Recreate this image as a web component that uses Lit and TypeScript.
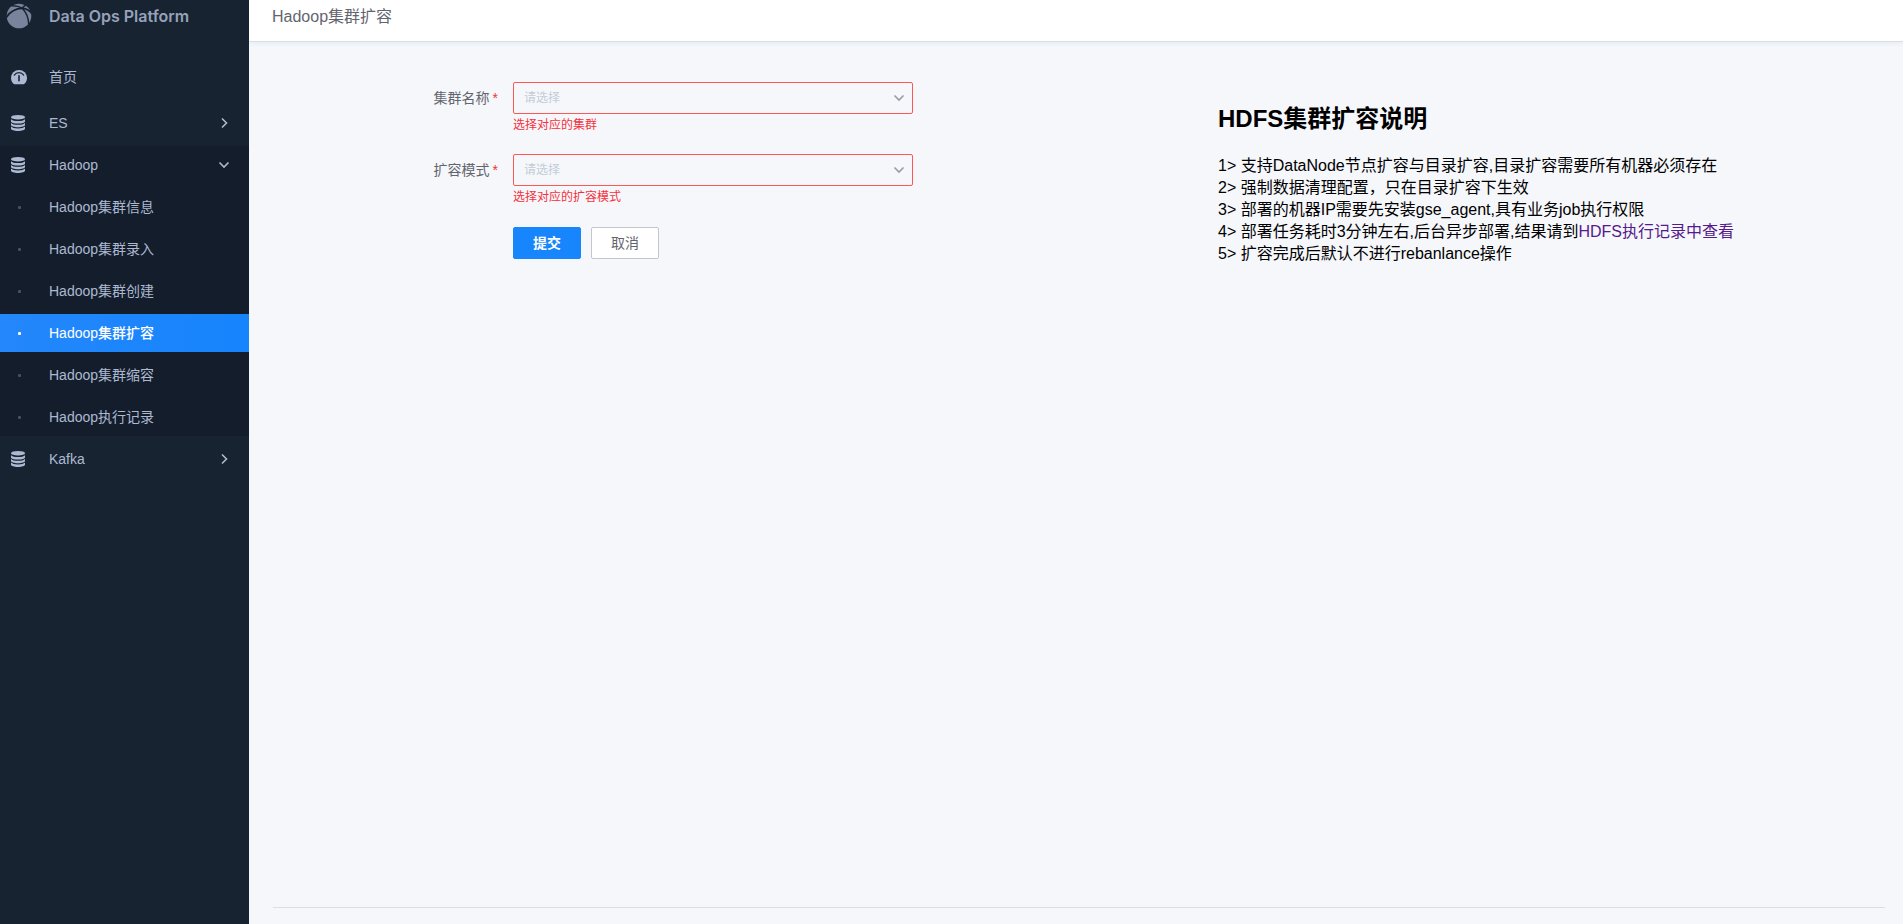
import { LitElement, html, css, svg } from "lit";
import { customElement, state } from "lit/decorators.js";
import { classMap } from "lit/directives/class-map.js";

const FONT = css`"Liberation Sans", "Noto Sans CJK SC", sans-serif`;

const dbIcon = svg`<svg class="icon" viewBox="0 0 16 18" width="16" height="18" fill="currentColor" aria-hidden="true">
  <ellipse cx="8" cy="3.2" rx="7" ry="2.3"/>
  <path d="M1 5.2c1.200 1.300 3.600 1.900 7 1.900s5.800-.6 7-1.900v2.200c0 1.200-3.100 2.200-7 2.200S1 8.600 1 7.400z"/>
  <path d="M1 8.900c1.200 1.300 3.600 1.900 7 1.900s5.800-.6 7-1.900v2.200c0 1.200-3.100 2.200-7 2.200s-7-1-7-2.200z"/>
  <path d="M1 12.600c1.200 1.300 3.600 1.900 7 1.900s5.800-.6 7-1.900v2.200c0 1.200-3.100 2.200-7 2.200s-7-1-7-2.200z"/>
</svg>`;

const gaugeIcon = svg`<svg class="icon gauge" viewBox="0 0 16 16" width="16" height="16" aria-hidden="true">
  <path fill="currentColor" d="M3.300 15.300C1.300 14 0 11.500 0 8.900a8 8 0 0 1 16 0c0 2.600-1.300 5.100-3.300 6.400z"/>
  <path fill="none" stroke="#182332" stroke-width="1.200" stroke-linecap="round" d="M3.300 6.200a5.600 5.600 0 0 1 9.400 0"/>
  <path fill="none" stroke="#182332" stroke-width="1.600" stroke-linecap="round" d="M8 6.800v5"/>
</svg>`;

const logo = svg`<svg class="logo" viewBox="0 0 26 26" width="26" height="26" aria-hidden="true">
  <circle cx="13" cy="13" r="12.300" fill="#78849c"/>
  <path fill="none" stroke="#182332" stroke-width="1.800" d="M.2 14.500C3.500 9 10 5 17 5.400c3.600.3 6.600 2 9 5.200"/>
  <path fill="none" stroke="#182332" stroke-width="1.500" d="M16.200 5.200c4.800 4.600 6.400 10 6.600 16.800M5.500 2.800c3.800-.2 7.700.6 10.700 2.400M16.200 5.200c1-1.300 2-2.200 3.600-3"/>
</svg>`;

const chevron = (cls: string, d: string) => html`<svg class=${cls} viewBox="0 0 12 12" width="12" height="12" aria-hidden="true">
  <path d=${d} fill="none" stroke="currentColor" stroke-width="1.600" />
</svg>`;
const DOWN = "M1.500 3.500 6 8l4.500-4.500";
const RIGHT = "M4 1.500 8.500 6 4 10.500";

@customElement("side-nav")
class SideNav extends LitElement {
  @state() private open = "Hadoop";
  @state() private current = "Hadoop集群扩容";

  private groups = [
    { name: "ES", items: [] as string[] },
    {
      name: "Hadoop",
      items: ["Hadoop集群信息", "Hadoop集群录入", "Hadoop集群创建", "Hadoop集群扩容", "Hadoop集群缩容", "Hadoop执行记录"],
    },
    { name: "Kafka", items: [] as string[] },
  ];

  static styles = css`
    :host { display: block; background: #182332; color: #acb9d1; font: 14px/20px ${FONT}; }
    .brand { display: flex; align-items: center; height: 32px; padding-left: 6px; color: #96a2b9; font-size: 16px; font-weight: 600; font-family: Inter, "Noto Sans CJK SC", sans-serif; }
    .logo { flex: none; width: 26px; margin-right: 17px; }
    .menu { display: flex; flex-direction: column; gap: 4px; padding-top: 26px; }
    .row { box-sizing: border-box; display: grid; grid-template-columns: 39px 1fr 12px; align-items: center; width: 100%; height: 38px; padding: 0 19px 0 10px; border: 0; background: none; color: inherit; font: inherit; text-align: left; text-decoration: none; cursor: pointer; }
    .home { margin-bottom: 4px; }
    .icon { display: block; }
    .gauge { margin-left: 1px; }
    .group { display: flex; flex-direction: column; gap: 4px; }
    .group.open { background: #141d2b; }
    .dot { width: 3px; height: 3px; margin-left: 8px; border-radius: 1px; background: #48505e; }
    .active { background: linear-gradient(90deg, #2487fb, #1684fd); color: #fff; font-weight: 500; }
    .active .dot { background: #fff; }
  `;

  render() {
    return html`
      <div class="brand">${logo}<span>Data Ops Platform</span></div>
      <nav class="menu">
        <a class="row home" href="#home">${gaugeIcon}<span>首页</span></a>
        ${this.groups.map((g) => {
          const open = g.name === this.open;
          return html`<div class=${classMap({ group: true, open })}>
            <button class="row" type="button" aria-expanded=${open ? "true" : "false"}
              @click=${() => (this.open = open ? "" : g.name)}>
              ${dbIcon}<span>${g.name}</span>${chevron("arrow", open ? DOWN : RIGHT)}
            </button>
            ${open ? g.items.map((t) => html`<a class=${classMap({ row: true, active: t === this.current })} href="#"
              @click=${() => (this.current = t)}><i class="dot"></i><span>${t}</span></a>`) : ""}
          </div>`;
        })}
      </nav>`;
  }
}

@customElement("scale-form")
class ScaleForm extends LitElement {
  private fields = [
    { id: "cluster", label: "集群名称", error: "选择对应的集群" },
    { id: "mode", label: "扩容模式", error: "选择对应的扩容模式" },
  ];

  static styles = css`
    :host { display: block; font: 14px/32px ${FONT}; color: #63656e; }
    form { display: grid; grid-template-columns: 150px minmax(0, 400px); }
    label { padding-right: 14px; text-align: right; }
    .star { padding: 0 1px 0 3px; color: #ea3636; font-size: 14px; }
    .field { min-height: 72px; }
    .box { display: grid; align-items: center; }
    select { grid-area: 1 / 1; appearance: none; box-sizing: border-box; width: 100%; height: 32px; padding: 0 36px 0 10px; border: 1px solid #ff5656; border-radius: 2px; background: transparent; color: #c3cdd7; font: 12px/30px ${FONT}; outline: none; }
    .arrow { grid-area: 1 / 1; justify-self: end; margin-right: 8px; color: #979ba5; pointer-events: none; }
    .error { margin: 0; padding-top: 2px; color: #f5313c; font-size: 12px; line-height: 18px; }
    .actions { grid-column: 2; display: flex; gap: 10px; padding-top: 1px; }
    button { box-sizing: border-box; width: 68px; height: 32px; padding: 0; border: 1px solid #c4c6cc; border-radius: 2px; background: #fff; color: #63656e; font: 14px/30px ${FONT}; cursor: pointer; }
    .primary { border-color: #1785fc; background: #1785fc; color: #fff; font-weight: 700; }
  `;

  render() {
    return html`<form @submit=${(e: Event) => e.preventDefault()}>
      ${this.fields.map((f) => html`
        <label for=${f.id}>${f.label}<span class="star">*</span></label>
        <div class="field">
          <div class="box">
            <select id=${f.id} aria-invalid="true" aria-describedby="${f.id}-error"><option value="">请选择</option></select>
            ${chevron("arrow", DOWN)}
          </div>
          <p class="error" id="${f.id}-error">${f.error}</p>
        </div>`)}
      <div class="actions">
        <button class="primary" type="submit">提交</button>
        <button type="reset">取消</button>
      </div>
    </form>`;
  }
}

@customElement("app-root")
class AppRoot extends LitElement {
  static styles = css`
    :host { display: grid; grid-template-columns: 249px minmax(0, 1fr); min-height: 100vh; background: #f5f7fb; font-family: ${FONT}; }
    side-nav { z-index: 1; }
    .page { display: flex; flex-direction: column; }
    header { padding: 0 23px; background: #fff; border-bottom: 1px solid #dcdee5; box-shadow: 0 2px 4px #e6edf6; }
    h1 { margin: 0; padding-bottom: 8px; color: #63656e; font-size: 16px; font-weight: 400; line-height: 33px; }
    main { flex: 1; display: grid; grid-template-columns: 945fr 667fr; align-content: start; margin: 0 18px 0 24px; padding-top: 40px; }
    .form { padding-left: 90px; }
    .notes { padding-top: 22px; color: #000; font-size: 16px; line-height: 22px; }
    h2 { margin: 0 0 21px; font-size: 24px; line-height: 30px; font-weight: 700; }
    p { margin: 0; }
    a { color: #551a8b; text-decoration: none; }
    footer { height: 16px; margin: 0 18px 0 24px; border-top: 1px solid #dcdee5; }
  `;

  render() {
    return html`
      <side-nav></side-nav>
      <div class="page">
        <header><h1>Hadoop集群扩容</h1></header>
        <main>
          <scale-form class="form"></scale-form>
          <section class="notes">
            <h2>HDFS集群扩容说明</h2>
            <p>1&gt; 支持DataNode节点扩容与目录扩容,目录扩容需要所有机器必须存在</p>
            <p>2&gt; 强制数据清理配置，只在目录扩容下生效</p>
            <p>3&gt; 部署的机器IP需要先安装gse_agent,具有业务job执行权限</p>
            <p>4&gt; 部署任务耗时3分钟左右,后台异步部署,结果请到<a href="#records">HDFS执行记录中查看</a></p>
            <p>5&gt; 扩容完成后默认不进行rebanlance操作</p>
          </section>
        </main>
        <footer></footer>
      </div>`;
  }
}
